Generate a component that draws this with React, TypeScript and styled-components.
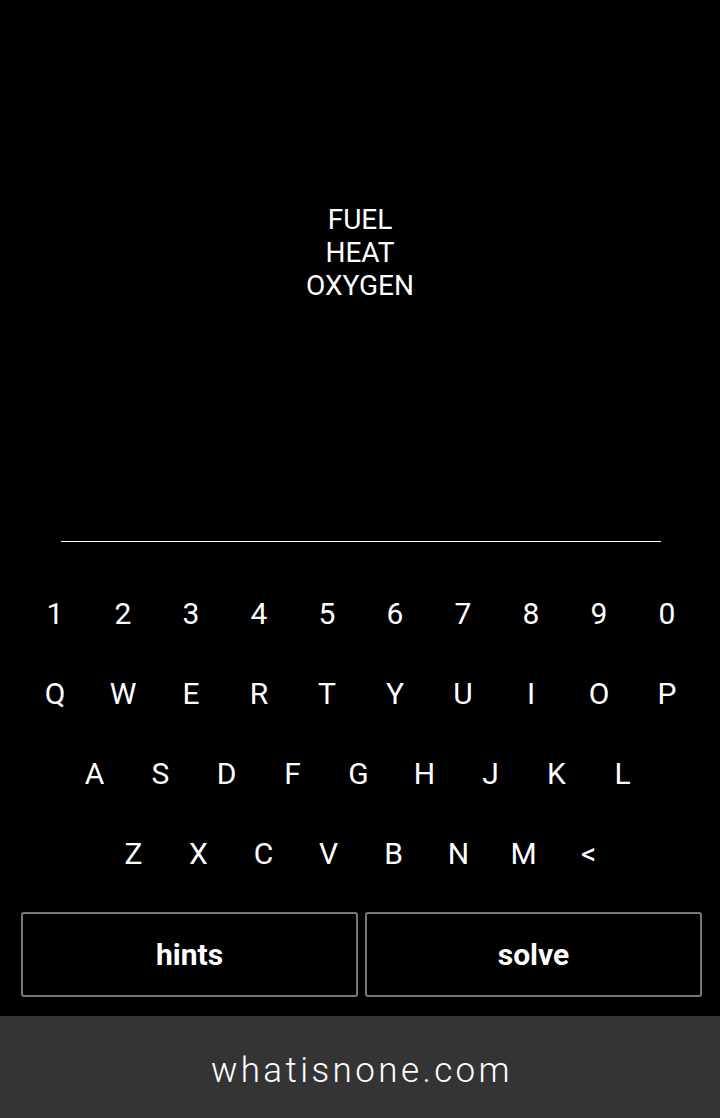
import { FC } from "react";
import styled, { createGlobalStyle } from "styled-components";

const GlobalStyle = createGlobalStyle`
  html, body {
    margin: 0;
    padding: 0;
    background: #000;
  }
  body {
    font-family: Roboto, "Liberation Sans", sans-serif;
    color: #fff;
  }
`;

const clues = ["FUEL", "HEAT", "OXYGEN"];

const rows: { keys: string[]; pitch: number; shift: number }[] = [
  { keys: ["1", "2", "3", "4", "5", "6", "7", "8", "9", "0"], pitch: 68, shift: 2 },
  { keys: ["Q", "W", "E", "R", "T", "Y", "U", "I", "O", "P"], pitch: 68, shift: 2 },
  { keys: ["A", "S", "D", "F", "G", "H", "J", "K", "L"], pitch: 66, shift: -3 },
  { keys: ["Z", "X", "C", "V", "B", "N", "M", "<"], pitch: 65, shift: 2 },
];

const App: FC = () => {
  return (
    <>
      <GlobalStyle />
      <Page>
        <Clues>
          {clues.map((c) => (
            <Clue key={c}>{c}</Clue>
          ))}
        </Clues>

        <Answer />

        <Keyboard>
          {rows.map((row, i) => (
            <KeyRow key={i} $shift={row.shift}>
              {row.keys.map((k) => (
                <Key key={k} $pitch={row.pitch}>
                  {k}
                </Key>
              ))}
            </KeyRow>
          ))}
        </Keyboard>

        <Actions>
          <ActionButton>hints</ActionButton>
          <ActionButton>solve</ActionButton>
        </Actions>

        <Footer>whatisnone.com</Footer>
      </Page>
    </>
  );
};

export default App;

const Page = styled.div`
  width: 720px;
  min-height: 1118px;
  display: flex;
  flex-direction: column;
  background: #000;
`;

const Clues = styled.div`
  padding-top: 203px;
  display: flex;
  flex-direction: column;
  align-items: center;
`;

const Clue = styled.div`
  font-size: 28px;
  line-height: 33px;
  color: #fff;
`;

const Answer = styled.div`
  width: 600px;
  height: 1px;
  margin: 239px auto 0 61px;
  background: #fff;
`;

const Keyboard = styled.div`
  margin-top: 31px;
  display: flex;
  flex-direction: column;
`;

const KeyRow = styled.div<{ $shift: number }>`
  display: flex;
  justify-content: center;
  height: 80px;
  padding-left: ${({ $shift }) => ($shift > 0 ? $shift : 0)}px;
  padding-right: ${({ $shift }) => ($shift < 0 ? -$shift : 0)}px;
`;

const Key = styled.div<{ $pitch: number }>`
  width: ${({ $pitch }) => $pitch}px;
  display: flex;
  align-items: center;
  justify-content: center;
  font-size: 30px;
  color: #fff;
`;

const Actions = styled.div`
  margin-top: 19px;
  padding-left: 21px;
  display: grid;
  grid-template-columns: 337px 337px;
  column-gap: 7px;
`;

const ActionButton = styled.button`
  height: 85px;
  box-sizing: border-box;
  background: #000;
  border: 2px solid #777;
  border-radius: 3px;
  color: #fff;
  font-family: Roboto, "Liberation Sans", sans-serif;
  font-size: 30px;
  font-weight: 700;
  cursor: pointer;
`;

const Footer = styled.div`
  margin-top: 19px;
  height: 102px;
  box-sizing: border-box;
  padding: 6px 0 0 4px;
  background: #343434;
  display: flex;
  align-items: center;
  justify-content: center;
  font-size: 35px;
  font-weight: 300;
  letter-spacing: 3.4px;
  color: #fff;
`;
